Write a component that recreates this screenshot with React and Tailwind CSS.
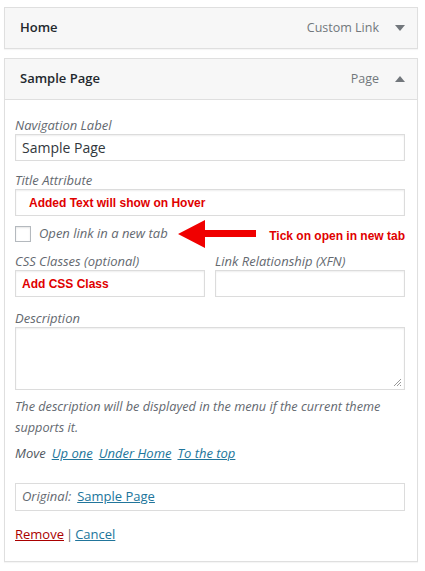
import React from 'react';

// Menu item editor panels (WordPress style)

const Caret = ({ up }) => (
  <svg width="10" height="6" viewBox="0 0 10 6" className="ml-[16px]">
    {up ? <path d="M0 6 L5 0 L10 6 Z" fill="#72777c" /> : <path d="M0 0 L10 0 L5 6 Z" fill="#72777c" />}
  </svg>
);

const Header = ({ title, type, up }) => (
  <div className="h-[40px] flex items-center bg-[#f7f7f7] pl-[15px] pr-[12px]">
    <span className="text-[13px] font-semibold text-[#23282d] flex-1">{title}</span>
    <span className="text-[12.5px] text-[#72777c]">{type}</span>
    <Caret up={up} />
  </div>
);

const Label = ({ children, className = '' }) => (
  <div className={`h-[17px] leading-[17px] text-[13px] italic text-[#646970] ${className}`}>{children}</div>
);

const Field = ({ children, className = '' }) => (
  <div className={`h-[27px] border border-[#dcdcdc] bg-white shadow-[inset_0_1px_2px_rgba(0,0,0,0.07)] flex items-center px-[6px] ${className}`}>
    {children}
  </div>
);

const Note = ({ children }) => (
  <span className="text-[12px] font-bold text-[#e00000] [font-family:'Liberation_Sans',Arial,sans-serif]">{children}</span>
);

export default function App() {
  return (
    <div className="min-h-screen bg-white px-[4px] pt-[7px] [font-family:'Open_Sans',sans-serif] text-[#32373c]">
      <div className="w-[414px] border border-[#dfdfdf] shadow-[0_1px_1px_rgba(0,0,0,0.04)]">
        <Header title="Home" type="Custom Link" />
      </div>

      <div className="w-[414px] mt-[9px] border border-[#dfdfdf] shadow-[0_1px_1px_rgba(0,0,0,0.04)]">
        <div className="border-b border-[#dfdfdf]">
          <Header title="Sample Page" type="Page" up />
        </div>
        <div className="pl-[10px] pr-[12px] pt-[17px] pb-[16px]">
          <Label>Navigation Label</Label>
          <Field>
            <span className="text-[14px] text-[#32373c]">Sample Page</span>
          </Field>

          <Label className="mt-[11px]">Title Attribute</Label>
          <Field className="px-[13px]">
            <Note>Added Text will show on Hover</Note>
          </Field>

          <div className="mt-[10px] h-[16px] flex items-center">
            <div className="w-[16px] h-[16px] border border-[#b4b9be] bg-white shadow-[inset_0_1px_2px_rgba(0,0,0,0.1)]" />
            <span className="ml-[8px] text-[13px] italic text-[#646970]">Open link in a new tab</span>
            <svg width="78" height="28" viewBox="0 0 78 28" className="ml-[10px] -my-[6px] shrink-0">
              <path d="M0 14 L27 0 L27 10 L78 10 L78 17 L27 17 L27 28 Z" fill="#f00000" />
            </svg>
            <span className="ml-auto">
              <Note>Tick on open in new tab</Note>
            </span>
          </div>

          <div className="mt-[11px] grid grid-cols-2 gap-x-[10px]">
            <div>
              <Label>CSS Classes (optional)</Label>
              <Field className="px-[6px]">
                <Note>Add CSS Class</Note>
              </Field>
            </div>
            <div>
              <Label>Link Relationship (XFN)</Label>
              <Field />
            </div>
          </div>

          <Label className="mt-[13px]">Description</Label>
          <div className="relative h-[63px] border border-[#dcdcdc] bg-white shadow-[inset_0_1px_2px_rgba(0,0,0,0.07)]">
            <svg width="9" height="9" viewBox="0 0 9 9" className="absolute right-[2px] bottom-[2px]">
              <path d="M1 8 L8 1 M4 8 L8 4 M7 8 L8 7" stroke="#999" strokeWidth="1" />
            </svg>
          </div>

          <p className="mt-[6px] text-[12.7px] leading-[21px] italic text-[#646970]">
            The description will be displayed in the menu if the current theme supports it.
          </p>

          <div className="mt-[5px] text-[13px] leading-[21px] italic text-[#50575e] flex gap-[6px]">
            <span>Move</span>
            <a className="text-[#21759b] underline">Up one</a>
            <a className="text-[#21759b] underline">Under Home</a>
            <a className="text-[#21759b] underline">To the top</a>
          </div>

          <div className="mt-[19px] h-[28px] border border-[#dcdcdc] flex items-center px-[6px] text-[13px]">
            <span className="italic text-[#646970]">Original:</span>
            <a className="ml-[6px] text-[#21759b] underline">Sample Page</a>
          </div>

          <div className="mt-[13px] text-[13px] leading-[21px] text-[#646970]">
            <a className="text-[#a00] underline">Remove</a>
            <span className="mx-[2px]">|</span>
            <a className="text-[#21759b] underline">Cancel</a>
          </div>
        </div>
      </div>
    </div>
  );
}
